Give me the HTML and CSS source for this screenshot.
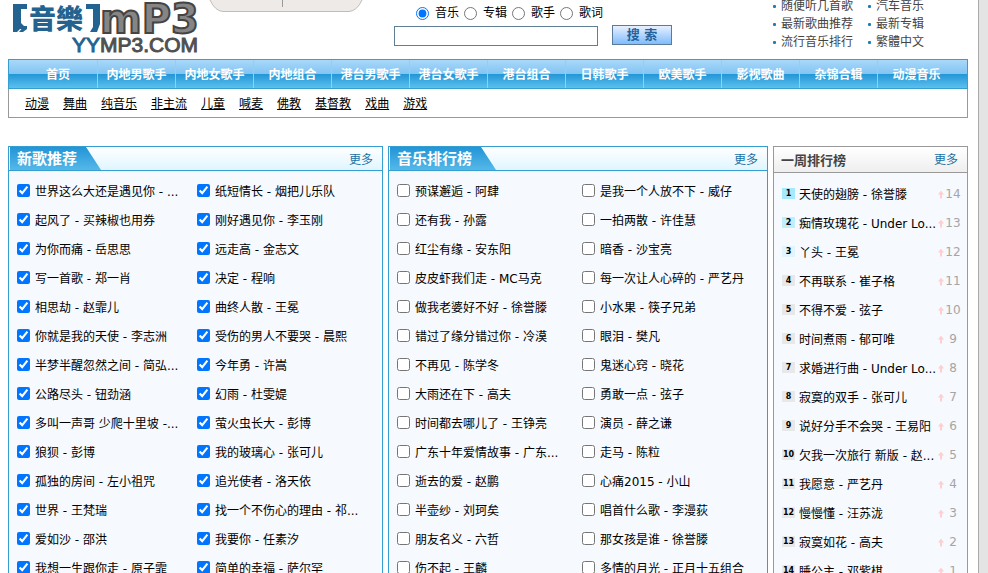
FILE: index.html
```
<!DOCTYPE html>
<html lang="zh-CN">
<head>
    <meta charset="utf-8">
    <meta name="viewport" content="width=device-width, initial-scale=1">
    <title>YYMP3 音樂</title>
    <link rel="stylesheet" href="styles.css">
</head>
<body>
<div class="page">
    <div class="header">
        <a class="logo" href="#">
            <svg width="192" height="54" viewBox="0 0 192 54">
                <g fill="#24628f">
                    <path d="M3 1h14v5h-6v14l4 4v2h-5l-3 3H3z"/>
                    <path d="M76 1h14v20l-3 8h-7l3-5V6h-7z"/>
                    <path d="M9 29l5-6h3v3l-4 3z"/>
                </g>
                <text class="logo-name" x="19" y="26">音樂</text>
                <text class="logo-mp3" x="90" y="30">mP3</text>
                <text class="logo-site" x="62" y="49"><tspan fill="#24628f">YY</tspan>MP3.COM</text>
            </svg>
        </a>
        <div class="tab-strip">
            <svg width="152" height="12" viewBox="0 0 152 12">
                <path d="M0 0q5 11 13 11.500h126q8-.5 13-11.500" fill="#eeeae7" stroke="#bfbcba"/>
                <path d="M72.500 0v7" stroke="#999"/>
            </svg>
        </div>
        <form class="search">
            <div class="search-types">
                <label><input type="radio" name="type" checked>音乐</label>
                <label><input type="radio" name="type">专辑</label>
                <label><input type="radio" name="type">歌手</label>
                <label><input type="radio" name="type">歌词</label>
            </div>
            <div class="search-box">
                <input type="text" aria-label="搜索">
                <button type="button">搜 索</button>
            </div>
        </form>
        <ul class="quick">
            <li><a href="#">随便听几首歌</a></li>
            <li><a href="#">汽车音乐</a></li>
            <li><a href="#">最新歌曲推荐</a></li>
            <li><a href="#">最新专辑</a></li>
            <li><a href="#">流行音乐排行</a></li>
            <li><a href="#">繁體中文</a></li>
        </ul>
    </div>

    <ul class="nav">
        <li><a href="#">首页</a></li>
        <li><a href="#">内地男歌手</a></li>
        <li><a href="#">内地女歌手</a></li>
        <li><a href="#">内地组合</a></li>
        <li><a href="#">港台男歌手</a></li>
        <li><a href="#">港台女歌手</a></li>
        <li><a href="#">港台组合</a></li>
        <li><a href="#">日韩歌手</a></li>
        <li><a href="#">欧美歌手</a></li>
        <li><a href="#">影视歌曲</a></li>
        <li><a href="#">杂锦合辑</a></li>
        <li><a href="#">动漫音乐</a></li>
    </ul>
    <div class="subnav">
        <a href="#">动漫</a>
        <a href="#">舞曲</a>
        <a href="#">纯音乐</a>
        <a href="#">非主流</a>
        <a href="#">儿童</a>
        <a href="#">喊麦</a>
        <a href="#">佛教</a>
        <a href="#">基督教</a>
        <a href="#">戏曲</a>
        <a href="#">游戏</a>
    </div>

    <div class="columns">
        <div class="panel new">
            <div class="panel-head">
                <h2>新歌推荐</h2>
                <a href="#">更多</a>
            </div>
            <ul class="songs">
                <li><label><input type="checkbox" checked>世界这么大还是遇见你 - ...</label></li>
                <li><label><input type="checkbox" checked>纸短情长 - 烟把儿乐队</label></li>
                <li><label><input type="checkbox" checked>起风了 - 买辣椒也用券</label></li>
                <li><label><input type="checkbox" checked>刚好遇见你 - 李玉刚</label></li>
                <li><label><input type="checkbox" checked>为你而痛 - 岳思思</label></li>
                <li><label><input type="checkbox" checked>远走高 - 金志文</label></li>
                <li><label><input type="checkbox" checked>写一首歌 - 郑一肖</label></li>
                <li><label><input type="checkbox" checked>决定 - 程响</label></li>
                <li><label><input type="checkbox" checked>相思劫 - 赵霏儿</label></li>
                <li><label><input type="checkbox" checked>曲终人散 - 王冕</label></li>
                <li><label><input type="checkbox" checked>你就是我的天使 - 李志洲</label></li>
                <li><label><input type="checkbox" checked>受伤的男人不要哭 - 晨熙</label></li>
                <li><label><input type="checkbox" checked>半梦半醒忽然之间 - 简弘...</label></li>
                <li><label><input type="checkbox" checked>今年勇 - 许嵩</label></li>
                <li><label><input type="checkbox" checked>公路尽头 - 钮劲涵</label></li>
                <li><label><input type="checkbox" checked>幻雨 - 杜雯媞</label></li>
                <li><label><input type="checkbox" checked>多叫一声哥 少爬十里坡 -...</label></li>
                <li><label><input type="checkbox" checked>萤火虫长大 - 彭博</label></li>
                <li><label><input type="checkbox" checked>狼狈 - 彭博</label></li>
                <li><label><input type="checkbox" checked>我的玻璃心 - 张可儿</label></li>
                <li><label><input type="checkbox" checked>孤独的房间 - 左小祖咒</label></li>
                <li><label><input type="checkbox" checked>追光使者 - 洛天依</label></li>
                <li><label><input type="checkbox" checked>世界 - 王梵瑞</label></li>
                <li><label><input type="checkbox" checked>找一个不伤心的理由 - 祁...</label></li>
                <li><label><input type="checkbox" checked>爱如沙 - 邵洪</label></li>
                <li><label><input type="checkbox" checked>我要你 - 任素汐</label></li>
                <li><label><input type="checkbox" checked>我想一生跟你走 - 原子霏</label></li>
                <li><label><input type="checkbox" checked>简单的幸福 - 萨尔罕</label></li>
            </ul>
        </div>

        <div class="panel">
            <div class="panel-head">
                <h2>音乐排行榜</h2>
                <a href="#">更多</a>
            </div>
            <ul class="songs">
                <li><label><input type="checkbox">预谋邂逅 - 阿肆</label></li>
                <li><label><input type="checkbox">是我一个人放不下 - 威仔</label></li>
                <li><label><input type="checkbox">还有我 - 孙露</label></li>
                <li><label><input type="checkbox">一拍两散 - 许佳慧</label></li>
                <li><label><input type="checkbox">红尘有缘 - 安东阳</label></li>
                <li><label><input type="checkbox">暗香 - 沙宝亮</label></li>
                <li><label><input type="checkbox">皮皮虾我们走 - MC马克</label></li>
                <li><label><input type="checkbox">每一次让人心碎的 - 严艺丹</label></li>
                <li><label><input type="checkbox">做我老婆好不好 - 徐誉滕</label></li>
                <li><label><input type="checkbox">小水果 - 筷子兄弟</label></li>
                <li><label><input type="checkbox">错过了缘分错过你 - 冷漠</label></li>
                <li><label><input type="checkbox">眼泪 - 樊凡</label></li>
                <li><label><input type="checkbox">不再见 - 陈学冬</label></li>
                <li><label><input type="checkbox">鬼迷心窍 - 晓花</label></li>
                <li><label><input type="checkbox">大雨还在下 - 高夫</label></li>
                <li><label><input type="checkbox">勇敢一点 - 弦子</label></li>
                <li><label><input type="checkbox">时间都去哪儿了 - 王铮亮</label></li>
                <li><label><input type="checkbox">演员 - 薛之谦</label></li>
                <li><label><input type="checkbox">广东十年爱情故事 - 广东...</label></li>
                <li><label><input type="checkbox">走马 - 陈粒</label></li>
                <li><label><input type="checkbox">逝去的爱 - 赵鹏</label></li>
                <li><label><input type="checkbox">心痛2015 - 小山</label></li>
                <li><label><input type="checkbox">半壶纱 - 刘珂矣</label></li>
                <li><label><input type="checkbox">唱首什么歌 - 李漫荻</label></li>
                <li><label><input type="checkbox">朋友名义 - 六哲</label></li>
                <li><label><input type="checkbox">那女孩是谁 - 徐誉滕</label></li>
                <li><label><input type="checkbox">伤不起 - 王麟</label></li>
                <li><label><input type="checkbox">多情的月光 - 正月十五组合</label></li>
            </ul>
        </div>

        <div class="panel week">
            <div class="panel-head">
                <h2>一周排行榜</h2>
                <a href="#">更多</a>
            </div>
            <ol class="rank">
                <li><b>1</b><a href="#">天使的翅膀 - 徐誉滕</a><i></i><span>14</span></li>
                <li><b>2</b><a href="#">痴情玫瑰花 - Under Lo...</a><i></i><span>13</span></li>
                <li><b>3</b><a href="#">丫头 - 王冕</a><i></i><span>12</span></li>
                <li><b>4</b><a href="#">不再联系 - 崔子格</a><i></i><span>11</span></li>
                <li><b>5</b><a href="#">不得不爱 - 弦子</a><i></i><span>10</span></li>
                <li><b>6</b><a href="#">时间煮雨 - 郁可唯</a><i></i><span>9</span></li>
                <li><b>7</b><a href="#">求婚进行曲 - Under Lo...</a><i></i><span>8</span></li>
                <li><b>8</b><a href="#">寂寞的双手 - 张可儿</a><i></i><span>7</span></li>
                <li><b>9</b><a href="#">说好分手不会哭 - 王易阳</a><i></i><span>6</span></li>
                <li><b>10</b><a href="#">欠我一次旅行 新版 - 赵...</a><i></i><span>5</span></li>
                <li><b>11</b><a href="#">我愿意 - 严艺丹</a><i></i><span>4</span></li>
                <li><b>12</b><a href="#">慢慢懂 - 汪苏泷</a><i></i><span>3</span></li>
                <li><b>13</b><a href="#">寂寞如花 - 高夫</a><i></i><span>2</span></li>
                <li><b>14</b><a href="#">睡公主 - 邓紫棋</a><i></i><span>1</span></li>
            </ol>
        </div>
    </div>
</div>
</body>
</html>
```
FILE: styles.css
```
* {
    box-sizing: border-box;
}

body {
    margin: 0;
    height: 100vh;
    overflow: hidden;
    background: #e4e4e4;
    color: #000;
    font: 12px/18px "DejaVu Sans", "Noto Sans CJK SC", sans-serif;
}

ul, ol {
    list-style: none;
    margin: 0;
    padding: 0;
}

a {
    color: inherit;
    text-decoration: none;
}

.page {
    min-height: 100vh;
    margin-right: 9px;
    padding: 0 10px 0 8px;
    border-right: 1px solid #aaa;
    background: #fff;
}

/* header */
.header {
    display: flex;
    align-items: flex-start;
    height: 59px;
}

.logo {
    width: 202px;
    padding: 3px 0 0 2px;
}

.logo svg, .tab-strip svg {
    display: block;
    overflow: visible;
}

.logo-name {
    font: 900 27px "Noto Sans CJK TC", sans-serif;
    fill: #24628f;
}

.logo-mp3 {
    font: bold 40px "DejaVu Sans", sans-serif;
    fill: #858585;
    stroke: #444;
    stroke-width: 2px;
}

.logo-site {
    font: 21px "Liberation Sans", sans-serif;
    fill: #505050;
    stroke: #505050;
}

.logo-site tspan {
    stroke: #24628f;
}

.search {
    margin-left: 32px;
    width: 278px;
}

.tab-strip {
    width: 152px;
}

.search-types {
    display: flex;
    padding: 4px 0 0 22px;
}

.search-types label {
    display: flex;
    align-items: center;
    width: 48px;
}

.search-types input {
    margin: 0 6px 0 0;
}

.search-box {
    display: flex;
    justify-content: space-between;
    padding-top: 3px;
}

.search-box input {
    width: 204px;
    height: 20px;
    margin-top: 1px;
    border: 1px solid #5f7f96;
}

.search-box button {
    width: 60px;
    height: 20px;
    padding: 0;
    border: 1px solid #5b7b9c;
    background: linear-gradient(#e8f0fe, #7fbcfc);
    color: #24629c;
    font: bold 13px/18px "DejaVu Sans", "Noto Sans CJK SC", sans-serif;
}

.quick {
    display: grid;
    grid-template-columns: 95px 70px;
    margin: -3px 30px 0 auto;
    color: #444;
}

.quick li {
    display: flex;
    align-items: center;
    gap: 5px;
}

.quick li::before {
    content: "";
    width: 3px;
    height: 3px;
    border-radius: 1px;
    background: #1c80b8;
}

/* navigation */
.nav {
    display: flex;
    height: 30px;
    padding-left: 10px;
    border: 1px solid #369fd2;
    background: linear-gradient(#a9d8fa, #82c4f2 50%, #2296d6 50%, #5cc0ee);
    color: #fff;
    font-weight: bold;
    line-height: 30px;
    text-align: center;
}

.nav li {
    width: 78px;
    border-left: 1px solid #8fd0f5;
}

.nav li:first-child {
    border-left: 0;
}

.subnav {
    display: flex;
    gap: 14px;
    height: 29px;
    padding: 6px 16px;
    border: 1px solid #999;
    border-top: 0;
}

.subnav a {
    text-decoration: underline;
}

/* panels */
.columns {
    display: grid;
    grid-template-columns: 375fr 380fr 195fr;
    gap: 5px;
    margin-top: 28px;
}

.panel {
    border: 1px solid #369fd2;
    background: #f6f9fe;
}

.panel-head {
    display: flex;
    justify-content: space-between;
    height: 24px;
    padding-right: 9px;
    border-bottom: 1px solid #369fd2;
    background: linear-gradient(#fff, #e0f5ff);
    line-height: 27px;
}

.panel-head a {
    color: #1a72a5;
}

.panel-head h2 {
    margin: 0 0 0 1px;
    padding: 0 24px 0 7px;
    background: linear-gradient(#2294d6, #55b8e8);
    clip-path: polygon(0 0, calc(100% - 15px) 0, 100% 100%, 0 100%);
    color: #fff;
    font-size: 15px;
    line-height: 24px;
}

.songs {
    display: grid;
    grid-template-columns: 1fr 1fr;
    padding: 6px 0 6px 8px;
}

.new .songs {
    padding-right: 5px;
}

.songs label {
    display: flex;
    align-items: center;
    height: 29px;
    white-space: nowrap;
}

.songs input {
    width: 13px;
    height: 13px;
    margin: 0 5px 3px 0;
}

.week {
    border-color: #999;
}

.week .panel-head {
    height: 26px;
    border-color: #999;
    background: linear-gradient(#fff, #eee);
}

.week .panel-head h2 {
    margin: 0;
    padding: 0 7px;
    background: none;
    clip-path: none;
    color: #444;
    font-size: 13px;
    line-height: 27px;
}

.rank {
    padding: 7px 6px 7px 8px;
}

.rank li {
    display: flex;
    align-items: center;
    height: 29px;
    white-space: nowrap;
}

.rank b {
    width: 13px;
    height: 11px;
    margin: 0 4px 3px 0;
    background: #e8e8e8;
    font-size: 8px;
    line-height: 11px;
    text-align: center;
}

.rank li:nth-child(1) b { background: #a8e8fd; }
.rank li:nth-child(2) b { background: #c0eefd; }
.rank li:nth-child(3) b { background: #e0f6ff; }

.rank a {
    flex: 1;
    min-width: 0;
}

.rank i {
    width: 6px;
    height: 8px;
    background: #ffcfcf;
    clip-path: polygon(50% 0, 100% 50%, 67% 50%, 67% 100%, 33% 100%, 33% 50%, 0 50%);
}

.rank span {
    width: 16px;
    margin: 0 0 2px 1px;
    color: #a5a5a5;
    text-align: center;
}
```
